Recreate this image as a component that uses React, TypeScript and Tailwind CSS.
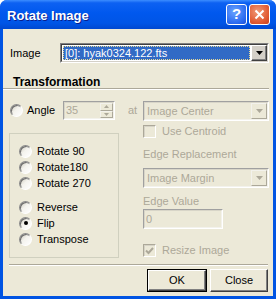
import React from "react";

const font = { fontFamily: '"Liberation Sans", Arial, sans-serif' };

function Arrow({ color }: { color: string }) {
  return (
    <svg width="7" height="4" viewBox="0 0 7 4">
      <path d="M0 0h7L3.5 4z" fill={color} />
    </svg>
  );
}

function Radio({ checked }: { checked?: boolean }) {
  return (
    <div className="flex h-[13px] w-[13px] shrink-0 items-center justify-center rounded-full border border-[#8a8a8a] border-b-white border-r-white bg-[linear-gradient(135deg,#c9c6b8_0%,#f4f3ee_45%,#ffffff_100%)] shadow-[inset_1px_1px_0_#6e6e6e]">
      {checked && <div className="h-[4px] w-[4px] rounded-full bg-black" />}
    </div>
  );
}

function DisabledCheck({ checked }: { checked?: boolean }) {
  return (
    <div className="flex h-[13px] w-[13px] shrink-0 items-center justify-center border border-[#aca899] border-b-white border-r-white shadow-[inset_1px_1px_0_#d6d3c6] bg-[#ece9d8]">
      {checked && (
        <svg width="9" height="8" viewBox="0 0 9 8">
          <path d="M1 3.5l2.5 2.5L8 1" stroke="#aca899" strokeWidth="2" fill="none" />
        </svg>
      )}
    </div>
  );
}

function DisabledBox({ w, h, text }: { w: string; h: string; text: string }) {
  return (
    <div className={`flex ${w} ${h} border border-[#a0a0a0] border-b-white border-r-white`}>
      <div className="flex flex-1 items-center border border-[#d8d5c8] border-b-[#f3f2ec] border-r-[#f3f2ec] pl-[1px] text-[#aca899]">
        {text}
      </div>
    </div>
  );
}

function DisabledSelect({ text }: { text: string }) {
  return (
    <div className="flex h-[20px] w-[126px] border border-[#a0a0a0] border-b-white border-r-white">
      <div className="flex flex-1 border border-[#d8d5c8] border-b-[#f3f2ec] border-r-[#f3f2ec]">
        <div className="flex flex-1 items-center pl-[2px] text-[#aca899]">{text}</div>
        <div className="flex w-[16px] items-center justify-center border border-[#f3f2ec] border-b-[#aca899] border-r-[#aca899]">
          <Arrow color="#aca899" />
        </div>
      </div>
    </div>
  );
}

function Button({ label, def, w }: { label: string; def?: boolean; w: string }) {
  return (
    <div className={`flex h-[23px] ${w} ${def ? "border border-black" : ""}`}>
      <div className="flex flex-1 items-center justify-center border border-white border-b-[#404040] border-r-[#404040] bg-[#ece9d8] shadow-[inset_-1px_-1px_0_#808080] text-black">
        {label}
      </div>
    </div>
  );
}

export default function App() {
  return (
    <div
      style={font}
      className="flex h-[299px] w-[276px] flex-col overflow-hidden rounded-t-[7px] bg-[#0054e3] text-[11px] text-black"
    >
      <div className="flex h-[29px] shrink-0 items-center bg-[linear-gradient(180deg,#3c8dff_0%,#0d61f2_10%,#0058ee_45%,#0055e6_80%,#0048d0_100%)] pl-[7px] pr-[6px]">
        <span className="pt-[2px] text-[13px] font-bold text-white [text-shadow:1px_1px_0_#0a1e8c]">Rotate Image</span>
        <div className="ml-auto flex gap-[2px]">
          <div className="flex h-[21px] w-[21px] items-center justify-center rounded-[3px] border border-white bg-[radial-gradient(circle_at_40%_35%,#6aa4ff,#2a6af0_70%,#1b4fd8)] text-[15px] font-bold text-white">
            ?
          </div>
          <div className="flex h-[21px] w-[21px] items-center justify-center rounded-[3px] border border-white bg-[radial-gradient(circle_at_40%_35%,#f09a78,#e15a32_65%,#c8401e)]">
            <svg width="11" height="11" viewBox="0 0 11 11">
              <path d="M1.5 1.5l8 8M9.5 1.5l-8 8" stroke="white" strokeWidth="2" />
            </svg>
          </div>
        </div>
      </div>

      <div className="mx-[3px] mb-[3px] flex flex-1 flex-col bg-[#ece9d8]">
        <div className="ml-[7px] mt-[14px] flex items-center">
          <span className="w-[50px]">Image</span>
          <div className="flex h-[20px] w-[209px] border border-[#808080] border-b-white border-r-white">
            <div className="flex flex-1 border border-[#404040] border-b-[#d4d0c8] border-r-[#d4d0c8] bg-white">
              <div className="m-[1px] flex flex-1 items-center border border-dotted border-[#e8d890] bg-[#316ac5] pl-[1px] text-white">
                [0]: hyak0324.122.fts
              </div>
              <div className="flex w-[16px] items-center justify-center border border-white border-b-[#404040] border-r-[#404040] bg-[#d4d0c8] shadow-[inset_-1px_-1px_0_#808080]">
                <Arrow color="#000" />
              </div>
            </div>
          </div>
        </div>

        <div className="ml-[10px] mt-[13px] text-[12px] font-bold leading-[12px]">Transformation</div>
        <div className="w-[266px] border-t border-b border-t-[#aca899] border-b-white" />

        <div className="ml-[7px] mt-[11px] flex items-start">
          <div className="flex h-[19px] w-[53px] items-center gap-[4px]">
            <Radio />
            <span>Angle</span>
          </div>
          <div className="flex h-[19px] w-[52px] border border-[#a0a0a0] border-b-white border-r-white">
            <div className="flex flex-1 border border-[#d8d5c8] border-b-[#f3f2ec] border-r-[#f3f2ec]">
              <div className="flex flex-1 items-center pl-[1px] text-[#aca899]">35</div>
              <div className="flex w-[13px] flex-col">
                <div className="flex flex-1 items-center justify-center border border-[#f3f2ec] border-b-[#aca899] border-r-[#aca899]">
                  <svg width="5" height="3" viewBox="0 0 5 3"><path d="M0 3h5L2.5 0z" fill="#aca899" /></svg>
                </div>
                <div className="flex flex-1 items-center justify-center border border-[#f3f2ec] border-b-[#aca899] border-r-[#aca899]">
                  <svg width="5" height="3" viewBox="0 0 5 3"><path d="M0 0h5L2.5 3z" fill="#aca899" /></svg>
                </div>
              </div>
            </div>
          </div>
          <span className="ml-[13px] mr-[5px] flex h-[19px] w-[10px] items-center text-[#aca899]">at</span>
          <DisabledSelect text="Image Center" />
        </div>

        <div className="mt-[4px] flex items-start">
          <div className="ml-[6px] mt-[8px] flex h-[125px] w-[110px] flex-col border border-[#d0d0bf] pl-[9px] pt-[9px]">
            {["Rotate 90", "Rotate180", "Rotate 270"].map((t) => (
              <div key={t} className="flex h-[16px] items-center gap-[5px]">
                <Radio />
                <span>{t}</span>
              </div>
            ))}
            <div className="h-[8px]" />
            {["Reverse", "Flip", "Transpose"].map((t) => (
              <div key={t} className="flex h-[16px] items-center gap-[5px]">
                <Radio checked={t === "Flip"} />
                <span>{t}</span>
              </div>
            ))}
          </div>

          <div className="ml-[24px] flex flex-col text-[#aca899]">
            <div className="flex h-[13px] items-center gap-[6px]">
              <DisabledCheck />
              <span>Use Centroid</span>
            </div>
            <div className="mt-[10px] leading-[13px]">Edge Replacement</div>
            <div className="mt-[7px]">
              <DisabledSelect text="Image Margin" />
            </div>
            <div className="mt-[7px] leading-[13px]">Edge Value</div>
            <div className="mt-[1px]">
              <DisabledBox w="w-[80px]" h="h-[20px]" text="0" />
            </div>
            <div className="mt-[15px] flex h-[13px] items-center gap-[6px]">
              <DisabledCheck checked />
              <span>Resize Image</span>
            </div>
          </div>
        </div>

        <div className="ml-[6px] mt-[6px] w-[259px] border-t border-b border-t-[#aca899] border-b-white" />

        <div className="ml-[144px] mt-[3px] flex gap-[3px]">
          <Button label="OK" def w="w-[60px]" />
          <Button label="Close" w="w-[58px]" />
        </div>
      </div>
    </div>
  );
}
